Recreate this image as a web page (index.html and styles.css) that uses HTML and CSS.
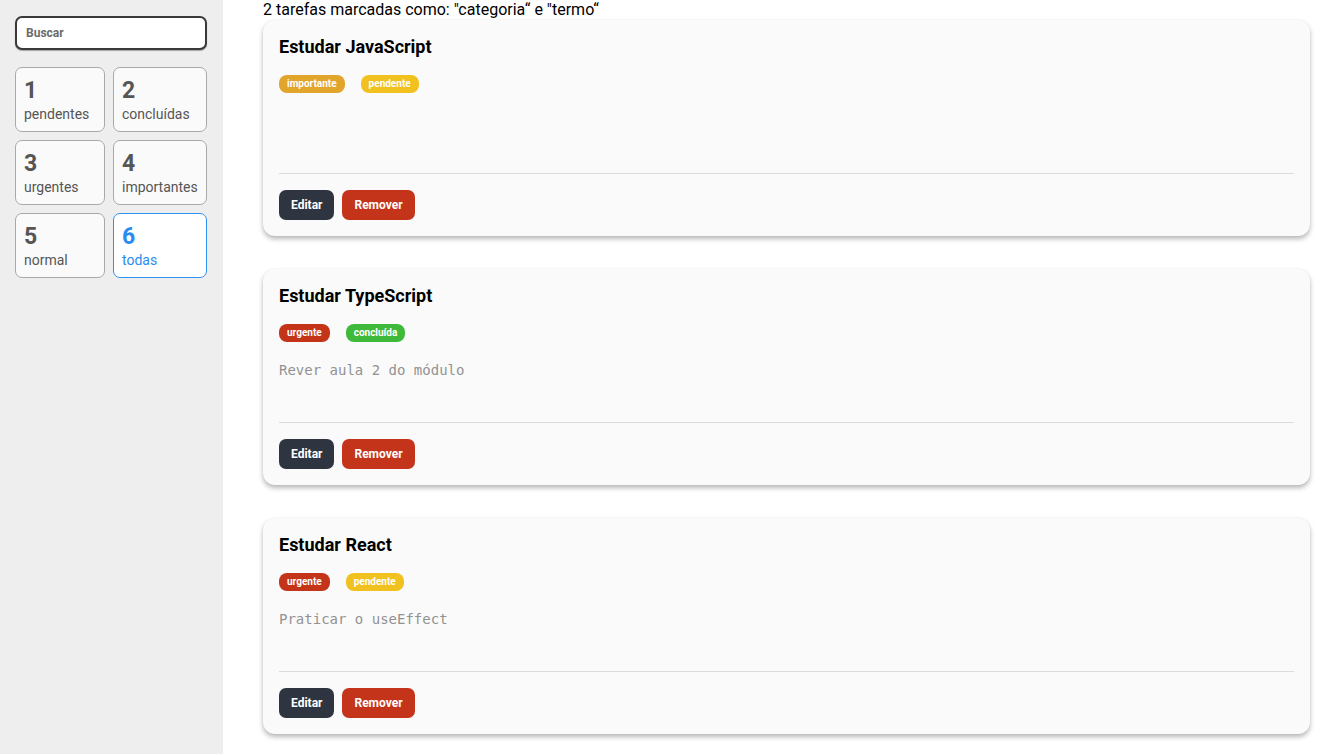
FILE: index.html
```html
<!DOCTYPE html>
<html lang="pt">
<head>
<meta charset="utf-8">
<title>Tarefas</title>
<link rel="stylesheet" href="styles.css">
</head>
<body>
<div class="app">
  <aside class="sidebar">
    <input class="search" type="text" placeholder="Buscar">
    <div class="filters">
      <div class="filter"><span class="num">1</span><span class="lbl">pendentes</span></div>
      <div class="filter wide"><span class="num">2</span><span class="lbl">concluídas</span></div>
      <div class="filter"><span class="num">3</span><span class="lbl">urgentes</span></div>
      <div class="filter wide"><span class="num">4</span><span class="lbl">importantes</span></div>
      <div class="filter"><span class="num">5</span><span class="lbl">normal</span></div>
      <div class="filter active"><span class="num">6</span><span class="lbl">todas</span></div>
    </div>
  </aside>
  <main class="main">
    <p class="summary">2 tarefas marcadas como: "categoria“ e "termo“</p>
    <div class="cards">
      <article class="card">
        <h3 class="title">Estudar JavaScript</h3>
        <div class="tags"><span class="tag important">importante</span><span class="tag pending">pendente</span></div>
        <div class="desc"></div>
        <div class="actions"><button class="btn edit">Editar</button><button class="btn remove">Remover</button></div>
      </article>
      <article class="card">
        <h3 class="title">Estudar TypeScript</h3>
        <div class="tags"><span class="tag urgent">urgente</span><span class="tag done">concluída</span></div>
        <div class="desc">Rever aula 2 do módulo</div>
        <div class="actions"><button class="btn edit">Editar</button><button class="btn remove">Remover</button></div>
      </article>
      <article class="card">
        <h3 class="title">Estudar React</h3>
        <div class="tags"><span class="tag urgent">urgente</span><span class="tag pending">pendente</span></div>
        <div class="desc">Praticar o useEffect</div>
        <div class="actions"><button class="btn edit">Editar</button><button class="btn remove">Remover</button></div>
      </article>
    </div>
  </main>
</div>
</body>
</html>
```

FILE: styles.css
```css
* { box-sizing: border-box; }
html, body { margin: 0; height: 100%; }
body {
  font-family: Roboto, "Liberation Sans", sans-serif;
  background: #fff;
  color: #000;
  overflow: hidden;
}
.app {
  display: flex;
  height: 754px;
}
.sidebar {
  width: 223px;
  flex: 0 0 223px;
  background: #eeeeee;
  padding: 16px 16px 0 15px;
}
.search {
  display: block;
  width: 192px;
  height: 34px;
  border: 2px solid #3a3a3a;
  border-radius: 7px;
  background: #fff;
  padding: 0 9px;
  font-family: Roboto, sans-serif;
  font-size: 12px;
  font-weight: 700;
  outline: none;
  box-shadow: 0 1px 1px rgba(0,0,0,0.3);
}
.search::placeholder { color: #6b6b6b; }
.filters {
  margin-top: 17px;
  display: grid;
  grid-template-columns: 90px 94px;
  grid-auto-rows: 65px;
  column-gap: 8px;
  row-gap: 8px;
}
.filter {
  background: #fafafa;
  border: 1px solid #a9a9a9;
  border-radius: 7px;
  padding: 9px 8px 0 8px;
  display: flex;
  flex-direction: column;
  color: #555;
}
.filter .num {
  font-size: 23px;
  font-weight: 700;
  line-height: 27px;
}
.filter .lbl {
  font-size: 14px;
  line-height: 17px;
  margin-top: 2px;
}
.filter.active {
  border-color: #2f8ff2;
  background: #fff;
  color: #2a8cf0;
}
.main {
  flex: 1;
  padding: 0 33px 0 40px;
}
.summary {
  margin: 0;
  font-size: 16px;
  line-height: 19px;
}
.cards {
  display: flex;
  flex-direction: column;
  gap: 33px;
  margin-top: 1px;
}
.card {
  background: #fafafa;
  border-radius: 12px;
  box-shadow: 0 3px 5px rgba(0,0,0,0.28), 0 0 2px rgba(0,0,0,0.06);
  padding: 16px 16px 16px 16px;
  height: 216px;
}
.title {
  margin: 0;
  font-size: 18px;
  font-weight: 700;
  line-height: 21px;
}
.tags {
  display: flex;
  gap: 16px;
  margin-top: 18px;
}
.tag {
  height: 18px;
  line-height: 18px;
  padding: 0 8px;
  border-radius: 8px;
  color: #fff;
  font-size: 10px;
  font-weight: 700;
}
.tag.important { background: #e1a52b; }
.tag.pending { background: #f1c21f; }
.tag.urgent { background: #c43418; }
.tag.done { background: #3fb93a; }
.desc {
  height: 81px;
  padding-top: 20px;
  font-family: "DejaVu Sans Mono", "Liberation Mono", monospace;
  font-size: 14px;
  line-height: 17px;
  color: #929292;
  border-bottom: 1px solid #dcdcdc;
}
.actions {
  display: flex;
  gap: 8px;
  margin-top: 16px;
}
.btn {
  height: 30px;
  border: none;
  border-radius: 7px;
  color: #fff;
  font-family: Roboto, sans-serif;
  font-size: 12px;
  font-weight: 700;
  padding: 0 12px;
}
.btn.edit { background: #2e3440; width: 55px; }
.btn.remove { background: #c4341a; width: 73px; }
```
